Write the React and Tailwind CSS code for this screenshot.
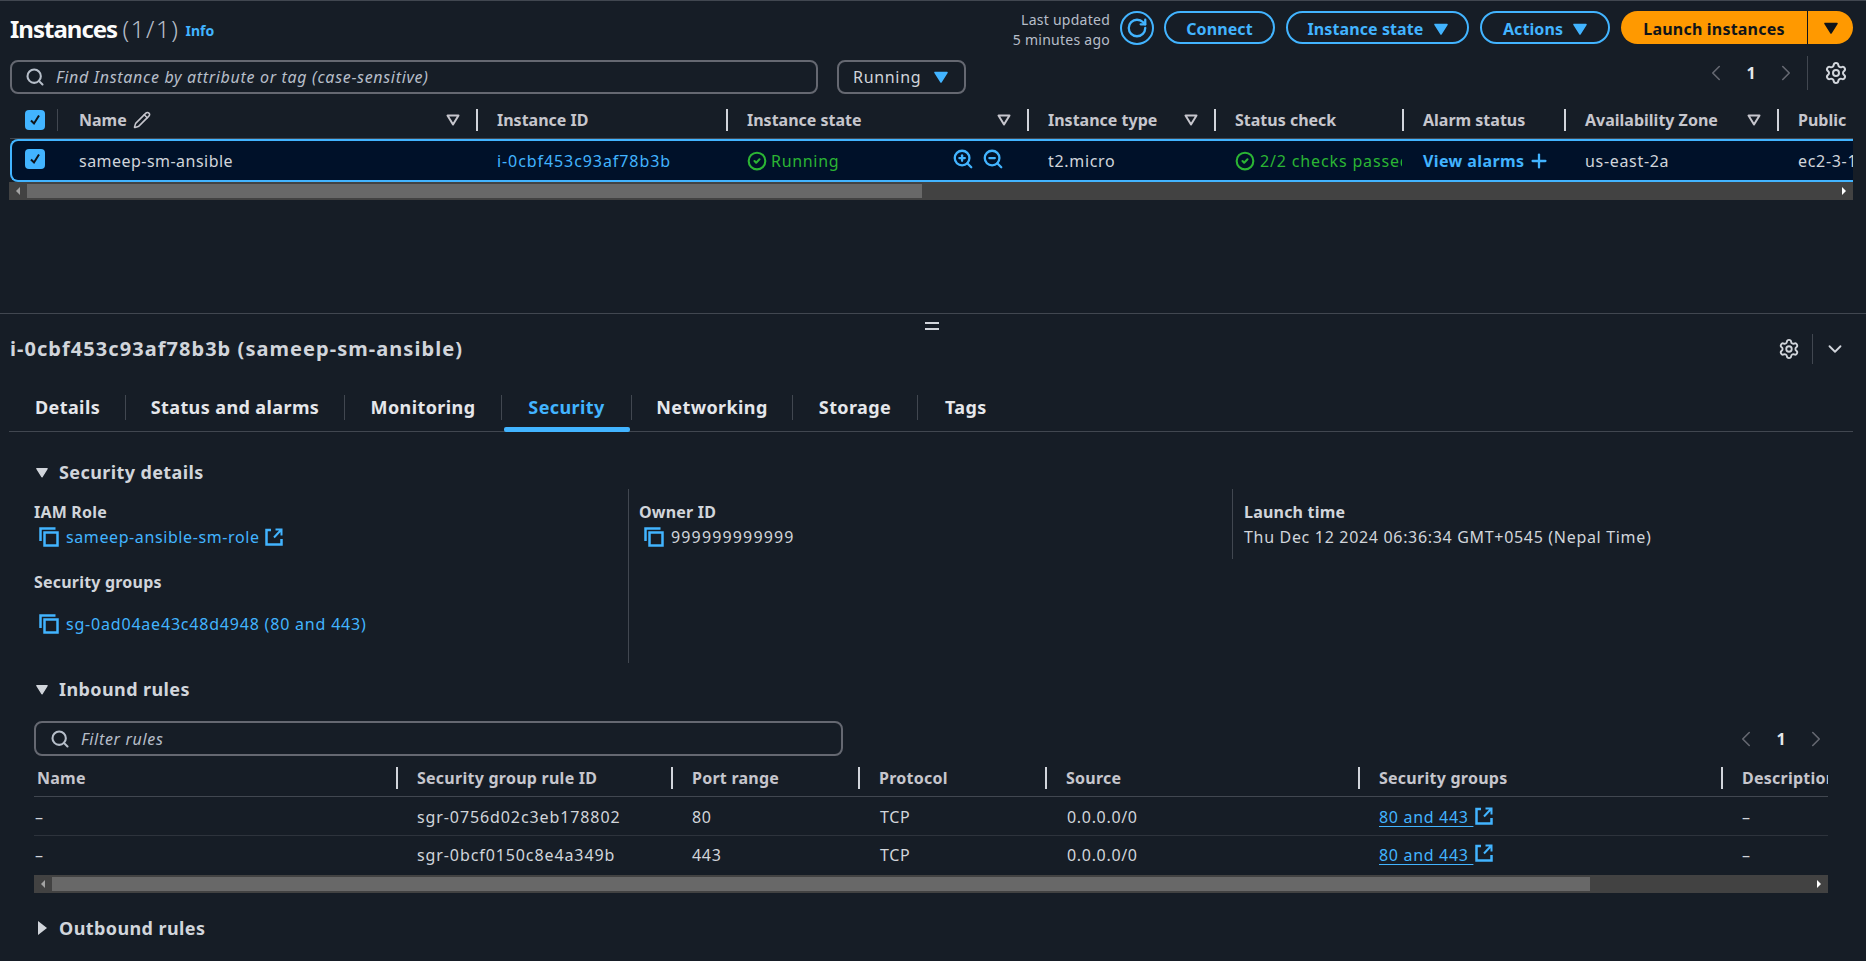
import { ChevronDown, ChevronLeft, ChevronRight, CircleCheck, Pencil, Plus, RotateCw, Search, Settings, ZoomIn, ZoomOut } from 'lucide-react'

const INSTANCE_COLS = [
  { label: 'Name', w: 'w-[418px]', pencil: true, sort: true, first: true },
  { label: 'Instance ID', w: 'w-[250px]' },
  { label: 'Instance state', w: 'w-[301px]', sort: true },
  { label: 'Instance type', w: 'w-[187px]', sort: true },
  { label: 'Status check', w: 'w-[188px]' },
  { label: 'Alarm status', w: 'w-[162px]' },
  { label: 'Availability Zone', w: 'w-[213px]', sort: true },
  { label: 'Public', w: 'w-[76px]' },
]

const RULE_COLS = [
  { label: 'Name', w: 'w-[362px]', first: true },
  { label: 'Security group rule ID', w: 'w-[275px]' },
  { label: 'Port range', w: 'w-[187px]' },
  { label: 'Protocol', w: 'w-[187px]' },
  { label: 'Source', w: 'w-[313px]' },
  { label: 'Security groups', w: 'w-[363px]' },
  { label: 'Description', w: 'w-[107px]' },
]

const RULES = [
  { id: 'sgr-0756d02c3eb178802', port: '80', pad: 'pt-[2px] border-b border-[#2d333c]' },
  { id: 'sgr-0bcf0150c8e4a349b', port: '443', pad: 'pb-[2px]' },
]

const TABS = [
  { label: 'Details', w: 'w-[117px]', inner: 'pl-[26px]' },
  { label: 'Status and alarms', w: 'w-[219px]', inner: 'justify-center' },
  { label: 'Monitoring', w: 'w-[157px]', inner: 'justify-center' },
  { label: 'Security', w: 'w-[130px]', inner: 'justify-center', active: true },
  { label: 'Networking', w: 'w-[161px]', inner: 'justify-center' },
  { label: 'Storage', w: 'w-[125px]', inner: 'justify-center' },
  { label: 'Tags', w: 'w-[80px]', inner: 'pl-[27px]', last: true },
]

function Caret({ className }) {
  return (
    <svg viewBox="0 0 14 12" className={className} fill="currentColor">
      <path d="M1 1.5h12L7 11z" stroke="currentColor" strokeWidth="1.5" strokeLinejoin="round" />
    </svg>
  )
}

function SortIcon() {
  return (
    <svg viewBox="0 0 14 12" className="w-[14px] h-[12px] shrink-0 text-[#c6c6cd]" fill="none">
      <path d="M1.5 1.5h11L7 10.5z" stroke="currentColor" strokeWidth="2" strokeLinejoin="round" />
    </svg>
  )
}

function CheckBox({ className = '' }) {
  return (
    <div className={`w-[20px] h-[20px] rounded-[4px] bg-[#42b4ff] flex items-center justify-center ${className}`}>
      <svg viewBox="0 0 14 14" className="w-[14px] h-[14px]" fill="none" stroke="#0f141a" strokeWidth="2"><path d="M3 7.500l3 3 5-8" /></svg>
    </div>
  )
}

function CopyIcon() {
  return (
    <svg viewBox="0 0 20 20" className="w-[20px] h-[20px] shrink-0 text-[#42b4ff]" fill="none" stroke="currentColor" strokeWidth="2.500">
      <path d="M1.500 14V1.500h15" />
      <rect x="5.500" y="5.500" width="13" height="13" />
    </svg>
  )
}

function ExternalIcon() {
  return (
    <svg viewBox="0 0 18 18" className="w-[18px] h-[18px] shrink-0 text-[#42b4ff]" fill="none" stroke="currentColor" strokeWidth="2.500">
      <path d="M6 2H1.500v14.500h15V11" />
      <path d="M9 9.500L15.500 2.500M10.500 1.500h6v6" strokeWidth="2" />
    </svg>
  )
}

function Scrollbar({ thumb, className }) {
  return (
    <div className={`flex items-center h-[18px] bg-[#424242] ${className}`}>
      <div className="w-[18px] shrink-0 flex justify-center">
        <span className="border-y-[4px] border-r-[4px] border-y-transparent border-r-[#a3a3a3]" />
      </div>
      <div className={`h-[14px] bg-[#686868] ${thumb}`} />
      <div className="ml-auto w-[18px] shrink-0 flex justify-center">
        <span className="border-y-[4px] border-l-[4px] border-y-transparent border-l-white" />
      </div>
    </div>
  )
}

function Pager({ className }) {
  return (
    <div className={`flex items-center text-[#656871] gap-[13px] ${className}`}>
      <ChevronLeft size={26} strokeWidth={1.5} />
      <span className="w-[18px] text-center text-[16px] font-bold tracking-normal text-[#e5e7eb]">1</span>
      <ChevronRight size={26} strokeWidth={1.5} />
    </div>
  )
}

function RuleHeader({ col }) {
  return (
    <div className={`${col.w} shrink-0 h-[22px] flex items-center overflow-hidden whitespace-nowrap font-bold tracking-[0.25px] text-[#c6c6cd] ${col.first ? 'pl-[3px]' : 'border-l-2 border-[#d1d5db] pl-[19px]'}`}>
      {col.label}
    </div>
  )
}

function InstanceHeader({ col }) {
  return (
    <div className={`${col.w} shrink-0 h-[22px] flex items-center overflow-hidden whitespace-nowrap font-bold tracking-[0px] text-[#c6c6cd] ${col.first ? 'pl-[21px]' : 'border-l-2 border-[#d1d5db] pl-[19px]'}`}>
      <span>{col.label}</span>
      {col.pencil && <Pencil size={18} strokeWidth={2} className="ml-[6px]" />}
      {col.sort && <span className="ml-auto mr-[16px]"><SortIcon /></span>}
    </div>
  )
}

function Heading({ open, children, className }) {
  return (
    <div className={`flex items-center h-[24px] text-[18px] font-bold tracking-[0.4px] text-[#d1d5db] ${className}`}>
      {open ? (
        <Caret className="w-[12px] h-[11px] ml-[2px] mr-[11px]" />
      ) : (
        <span className="ml-[4px] mr-[12px] border-y-[7px] border-l-[9px] border-y-transparent border-l-[#d1d5db]" />
      )}
      {children}
    </div>
  )
}

function Label({ children, className = '' }) {
  return <div className={`h-[20px] leading-[20px] font-bold tracking-[0.2px] text-[#d1d5db] ${className}`}>{children}</div>
}

export default function App() {
  return (
    <div className="relative h-[961px] w-[1866px] overflow-hidden bg-[#161d26] text-[16px] tracking-[0.68px] text-[#d1d5db] font-['Noto_Sans',sans-serif]">
      {/* instances list */}
      <div className="h-[314px] border-y border-[#414750]">
        <div className="flex items-center h-[33px] mt-[10px] pl-[10px] pr-[13px]">
          <h1 className="pt-[2px] text-[24px] font-bold tracking-[-1px] text-[#fbfbfb]">
            Instances <span className="font-light tracking-[1.6px] text-[#b6bec9]">(1/1)</span>
          </h1>
          <span className="ml-[6px] mt-[5px] text-[14px] font-bold tracking-normal text-[#42b4ff]">Info</span>
          <div className="ml-auto mt-[5px] w-[130px] text-right text-[14px] tracking-[0.25px] leading-[20px] text-[#b6bec9]">
            <div>Last updated</div>
            <div>5 minutes ago</div>
          </div>
          <div className="ml-[10px] w-[34px] h-[34px] rounded-full border-2 border-[#42b4ff] flex items-center justify-center text-[#42b4ff]">
            <RotateCw size={22} strokeWidth={2.5} />
          </div>
          <div className="ml-[10px] w-[111px] h-[33px] pt-[2px] rounded-full border-2 border-[#42b4ff] flex items-center justify-center font-bold tracking-[0.1px] text-[#42b4ff]">Connect</div>
          <div className="ml-[11px] w-[183px] h-[33px] pt-[2px] rounded-full border-2 border-[#42b4ff] flex items-center justify-center gap-[10px] font-bold tracking-[0.1px] text-[#42b4ff]">
            Instance state <Caret className="w-[14px] h-[12px]" />
          </div>
          <div className="ml-[11px] w-[130px] h-[33px] pt-[2px] rounded-full border-2 border-[#42b4ff] flex items-center justify-center gap-[10px] font-bold tracking-[0.1px] text-[#42b4ff]">
            Actions <Caret className="w-[14px] h-[12px]" />
          </div>
          <div className="ml-[11px] w-[232px] h-[33px] rounded-full bg-[#ff9900] flex items-center font-bold tracking-[0.2px] text-[#0f141a]">
            <span className="w-[187px] h-full pt-[2px] flex items-center justify-center border-r border-[#0f141a]">Launch instances</span>
            <span className="flex-1 flex justify-center"><Caret className="w-[14px] h-[12px]" /></span>
          </div>
        </div>

        <div className="flex items-center h-[34px] mt-[16px] pl-[10px] pr-[18px]">
          <div className="w-[808px] h-full flex items-center rounded-lg border-2 border-[#656871] pl-[13px] text-[#b6bec9]">
            <Search size={20} strokeWidth={2.5} />
            <span className="ml-[11px] italic">Find Instance by attribute or tag (case-sensitive)</span>
          </div>
          <div className="ml-[19px] w-[129px] h-full flex items-center rounded-lg border-2 border-[#656871] pl-[14px] text-[#d1d5db]">
            Running
            <Caret className="w-[14px] h-[12px] ml-[13px] text-[#42b4ff]" />
          </div>
          <Pager className="ml-auto mt-[-9px] mr-[8px]" />
          <div className="h-[34px] mt-[-9px] border-l border-[#414750] pl-[16px] flex items-center">
            <Settings size={24} strokeWidth={2} className="text-[#d1d5db]" />
          </div>
        </div>

        <div className="flex mt-[15px] ml-[10px] h-[30px] w-[1843px] border-b border-[#414750] overflow-hidden">
          <div className="w-[48px] shrink-0 h-[22px] flex items-center">
            <CheckBox className="ml-[15px]" />
            <div className="ml-[12px] h-full border-l border-[#414750]" />
          </div>
          {INSTANCE_COLS.map(col => <InstanceHeader key={col.label} col={col} />)}
        </div>

        <div className="flex items-center h-[43px] ml-[10px] w-[1843px] rounded-l-lg border-y-2 border-l-2 border-[#42b4ff] bg-[#001129] whitespace-nowrap overflow-hidden">
          <div className="w-[46px] shrink-0 pl-[13px]">
            <CheckBox className="mb-[4px]" />
          </div>
          <div className="w-[418px] shrink-0 pl-[21px] tracking-[0.47px] text-[#d1d5db]">sameep-sm-ansible</div>
          <div className="w-[250px] shrink-0 pl-[21px] tracking-[0.92px] text-[#42b4ff]">i-0cbf453c93af78b3b</div>
          <div className="w-[301px] shrink-0 pl-[21px] flex items-center text-[#2bb534]">
            <CircleCheck size={20} strokeWidth={2.5} />
            <span className="ml-[4px] mt-[1px]">Running</span>
            <ZoomIn size={22} strokeWidth={2.5} className="ml-[113px] mb-[3px] text-[#42b4ff]" />
            <ZoomOut size={22} strokeWidth={2.5} className="ml-[8px] mb-[3px] text-[#42b4ff]" />
          </div>
          <div className="w-[187px] shrink-0 pl-[21px]">t2.micro</div>
          <div className="w-[188px] shrink-0 pl-[21px] flex items-center overflow-hidden text-[#2bb534]">
            <CircleCheck size={20} strokeWidth={2.5} className="shrink-0" />
            <span className="ml-[5px] tracking-[0.85px]">2/2 checks passed</span>
          </div>
          <div className="w-[162px] shrink-0 pl-[21px] flex items-center font-bold tracking-[0.4px] text-[#42b4ff]">
            View alarms <Plus size={22} strokeWidth={2.5} className="ml-[4px]" />
          </div>
          <div className="w-[213px] shrink-0 pl-[21px]">us-east-2a</div>
          <div className="flex-1 pl-[21px] overflow-hidden">ec2-3-1</div>
        </div>

        <Scrollbar thumb="w-[895px]" className="ml-[9px] w-[1844px]" />
      </div>

      {/* drag handle */}
      <div className="absolute left-[925px] top-[322px] w-[14px] h-[8px] border-y-2 border-[#d1d5db]" />

      {/* instance details */}
      <div className="flex items-center h-[30px] mt-[20px] pl-[10px] pr-[20px]">
        <h2 className="text-[20px] font-bold tracking-[1.05px] text-[#d1d5db]">i-0cbf453c93af78b3b (sameep-sm-ansible)</h2>
        <Settings size={22} strokeWidth={2} className="ml-auto text-[#d1d5db]" />
        <div className="ml-[12px] h-[30px] border-l border-[#414750]" />
        <ChevronDown size={22} strokeWidth={2} className="ml-[11px] text-[#d1d5db]" />
      </div>

      <div className="flex items-center h-[49px] mt-[19px] ml-[9px] w-[1844px] border-b border-[#414750]">
        {TABS.map(tab => (
          <div key={tab.label} className={`relative h-[48px] flex items-center ${tab.w}`}>
            <div className={`h-[25px] w-full flex items-center text-[18px] font-bold tracking-[0.4px] whitespace-nowrap ${tab.inner} ${tab.last ? '' : 'border-r border-[#414750]'} ${tab.active ? 'text-[#42b4ff]' : 'text-[#e5e7eb]'}`}>
              {tab.label}
            </div>
            {tab.active && <div className="absolute left-[2px] right-[2px] bottom-[-1px] h-[5px] rounded-[2px] bg-[#42b4ff]" />}
          </div>
        ))}
      </div>

      <div className="pl-[34px]">
        <Heading open className="mt-[28px]">Security details</Heading>

        <div className="flex mt-[5px] h-[174px]">
          <div className="w-[594px] pt-[13px]">
            <Label>IAM Role</Label>
            <div className="flex items-center h-[24px] mt-[3px] pl-[5px] text-[#42b4ff]">
              <CopyIcon />
              <span className="ml-[7px] tracking-[0.6px]">sameep-ansible-sm-role</span>
              <span className="ml-[5px]"><ExternalIcon /></span>
            </div>
            <Label className="mt-[23px]">Security groups</Label>
            <div className="flex items-center h-[24px] mt-[20px] pl-[5px] text-[#42b4ff]">
              <CopyIcon />
              <span className="ml-[7px] tracking-[0.8px]">sg-0ad04ae43c48d4948 (80 and 443)</span>
            </div>
          </div>
          <div className="w-[604px] pt-[13px] pl-[10px] border-l border-[#414750]">
            <Label>Owner ID</Label>
            <div className="flex items-center h-[24px] mt-[3px] pl-[5px]">
              <CopyIcon />
              <span className="ml-[7px] tracking-[1.15px]">999999999999</span>
            </div>
          </div>
          <div className="h-[70px] pt-[13px] pl-[11px] border-l border-[#414750]">
            <Label>Launch time</Label>
            <div className="h-[24px] leading-[24px] mt-[3px]">Thu Dec 12 2024 06:36:34 GMT+0545 (Nepal Time)</div>
          </div>
        </div>

        <Heading open className="mt-[14px]">Inbound rules</Heading>

        <div className="flex items-center h-[35px] mt-[20px] w-[1794px]">
          <div className="w-[809px] h-full flex items-center rounded-lg border-2 border-[#656871] pl-[14px] text-[#b6bec9]">
            <Search size={20} strokeWidth={2.5} />
            <span className="ml-[11px] italic">Filter rules</span>
          </div>
          <Pager className="ml-auto mr-[-1px]" />
        </div>

        <div className="w-[1794px] overflow-hidden">
          <div className="flex mt-[11px] h-[30px] border-b border-[#414750]">
            {RULE_COLS.map(col => <RuleHeader key={col.label} col={col} />)}
          </div>
          {RULES.map(r => (
            <div key={r.id} className={`flex items-center h-[39px] ${r.pad}`}>
              <div className="w-[362px] shrink-0 pl-[1px]">–</div>
              <div className="w-[275px] shrink-0 pl-[21px] tracking-[0.9px]">{r.id}</div>
              <div className="w-[187px] shrink-0 pl-[21px]">{r.port}</div>
              <div className="w-[187px] shrink-0 pl-[22px]">TCP</div>
              <div className="w-[313px] shrink-0 pl-[22px]">0.0.0.0/0</div>
              <div className="w-[363px] shrink-0 pl-[21px] flex items-center text-[#42b4ff]">
                <span className="underline underline-offset-[3px]">80 and 443&nbsp;</span>
                <span className="ml-[2px] mb-[3px]"><ExternalIcon /></span>
              </div>
              <div className="pl-[21px]">–</div>
            </div>
          ))}
          <Scrollbar thumb="w-[1538px]" />
        </div>

        <Heading className="mt-[23px]">Outbound rules</Heading>
      </div>
    </div>
  )
}
